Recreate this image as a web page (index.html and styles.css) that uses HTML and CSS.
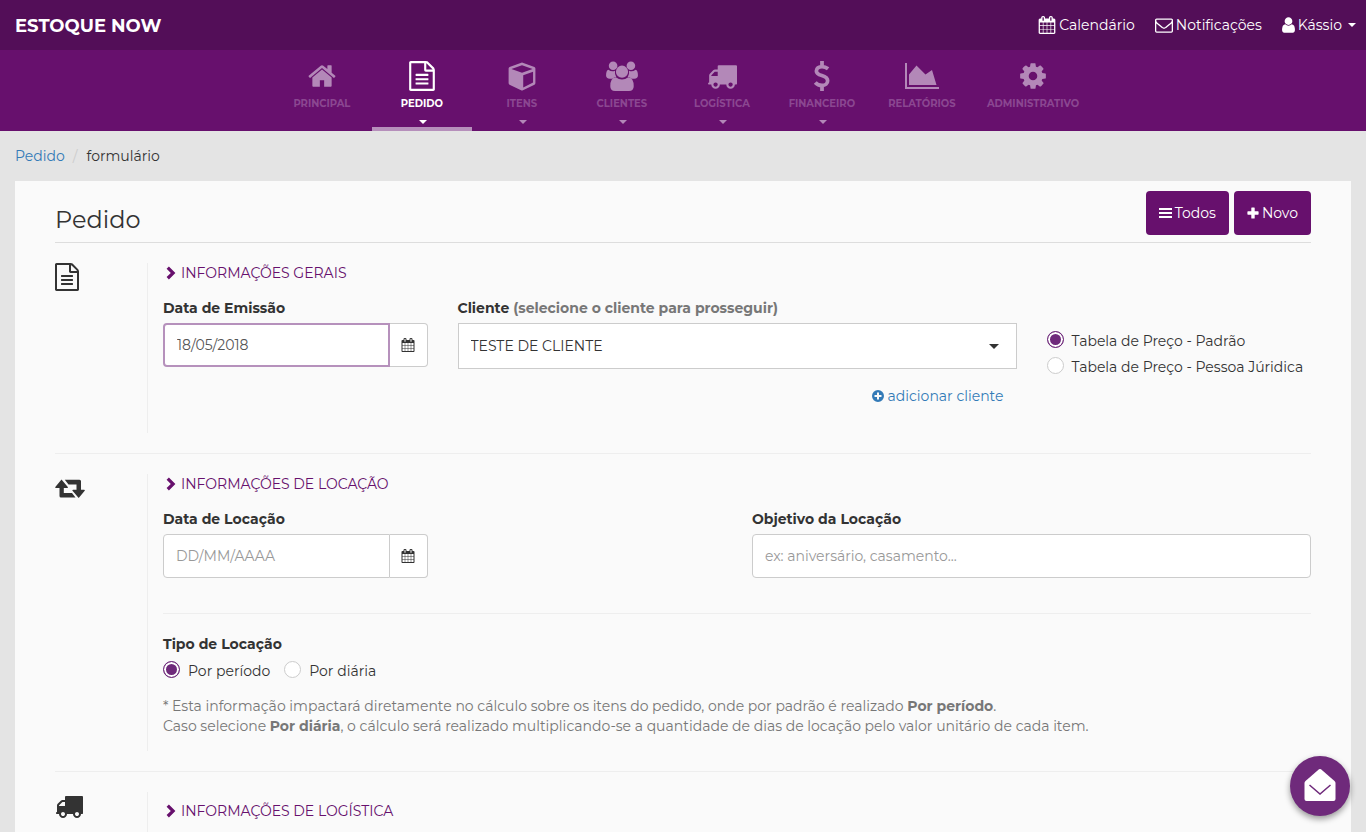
FILE: index.html
```html
<!DOCTYPE html>
<html lang="pt-BR">
<head>
<meta charset="utf-8">
<meta name="viewport" content="width=device-width, initial-scale=1">
<title>Estoque Now - Pedido</title>
<link rel="stylesheet" href="styles.css">
</head>
<body>
<svg class="sprite" aria-hidden="true">
  <symbol id="i-home" viewBox="0 0 1792 1792"><path d="M1472 992v480q0 26-19 45t-45 19h-384v-384h-256v384h-384q-26 0-45-19t-19-45v-480q0-1 .5-3t.5-3l575-474 575 474q1 2 1 6zm223-69l-62 74q-8 9-21 11h-3q-13 0-21-7l-692-577-692 577q-12 8-24 7-13-2-21-11l-62-74q-8-10-7-23.5t11-21.5l719-599q32-26 76-26t76 26l244 204v-195q0-14 9-23t23-9h192q14 0 23 9t9 23v408l219 182q10 8 11 21.500t-7 23.500z"/></symbol>
  <symbol id="i-file" viewBox="0 0 1792 1792"><path d="M1596 380q28 28 48 76t20 88v1152q0 40-28 68t-68 28h-1344q-40 0-68-28t-28-68v-1600q0-40 28-68t68-28h896q40 0 88 20t76 48zm-444-244v376h376q-10-29-22-41l-313-313q-12-12-41-22zm384 1528v-1024h-416q-40 0-68-28t-28-68v-416h-768v1536h1280zm-1024-864q0-14 9-23t23-9h704q14 0 23 9t9 23v64q0 14-9 23t-23 9h-704q-14 0-23-9t-9-23v-64zm736 224q14 0 23 9t9 23v64q0 14-9 23t-23 9h-704q-14 0-23-9t-9-23v-64q0-14 9-23t23-9h704zm0 256q14 0 23 9t9 23v64q0 14-9 23t-23 9h-704q-14 0-23-9t-9-23v-64q0-14 9-23t23-9h704z"/></symbol>
  <symbol id="i-truck" viewBox="0 0 1792 1792"><path d="M640 1408q0-52-38-90t-90-38-90 38-38 90 38 90 90 38 90-38 38-90zm-384-512h384v-256h-158q-13 0-22 9l-195 195q-9 9-9 22v30zm1280 512q0-52-38-90t-90-38-90 38-38 90 38 90 90 38 90-38 38-90zm256-1088v1024q0 15-4 26.500t-13.500 18.500-16.500 11.500-23.500 6-22.500 2-25.500 0-22.500-.5q0 106-75 181t-181 75-181-75-75-181h-384q0 106-75 181t-181 75-181-75-75-181h-64q-3 0-22.500.5t-25.500 0-22.500-2-23.500-6-16.500-11.500-13.500-18.500-4-26.500q0-26 19-45t45-19v-320q0-8-.5-35t0-38 2.500-34.500 6.500-37 14-30.500 22.500-30l198-198q19-19 50.500-32t58.500-13h160v-192q0-26 19-45t45-19h1024q26 0 45 19t19 45z"/></symbol>
  <symbol id="i-cal" viewBox="0 0 1792 1792"><path d="M192 1664h288v-288h-288v288zm352 0h320v-288h-320v288zm-352-352h288v-320h-288v320zm352 0h320v-320h-320v320zm-352-384h288v-288h-288v288zm736 736h320v-288h-320v288zm-384-736h320v-288h-320v288zm768 736h288v-288h-288v288zm-384-352h320v-320h-320v320zm-352-864v-288q0-13-9.500-22.500t-22.500-9.500h-64q-13 0-22.500 9.500t-9.500 22.500v288q0 13 9.500 22.500t22.500 9.500h64q13 0 22.500-9.500t9.500-22.500zm736 864h288v-320h-288v320zm-384-384h320v-288h-320v288zm384 0h288v-288h-288v288zm32-480v-288q0-13-9.500-22.500t-22.500-9.500h-64q-13 0-22.500 9.500t-9.500 22.500v288q0 13 9.500 22.500t22.500 9.500h64q13 0 22.500-9.500t9.500-22.500zm384-64v1280q0 52-38 90t-90 38h-1408q-52 0-90-38t-38-90v-1280q0-52 38-90t90-38h128v-96q0-66 47-113t113-47h64q66 0 113 47t47 113v96h384v-96q0-66 47-113t113-47h64q66 0 113 47t47 113v96h128q52 0 90 38t38 90z"/></symbol>
  <symbol id="i-mail" viewBox="0 0 1792 1792"><path d="M1664 1504v-768q-32 36-69 66-268 206-426 338-51 43-83 67t-86.500 48.500-102.500 24.500h-2q-48 0-102.500-24.500t-86.500-48.500-83-67q-158-132-426-338-37-30-69-66v768q0 13 9.500 22.500t22.500 9.500h1472q13 0 22.500-9.500t9.500-22.500zm0-1051v-24.500l-.5-13-3-12.500-5.500-9-9-7.500-14-2.500h-1472q-13 0-22.500 9.500t-9.500 22.500q0 168 147 284 193 152 401 317 6 5 35 29.500t46 37.500 44.500 31.500 50.500 27.500 43 9h2q20 0 43-9t50.500-27.500 44.500-31.500 46-37.500 35-29.500q208-165 401-317 54-43 100.500-115.500t46.500-131.500zm128-37v1088q0 66-47 113t-113 47h-1472q-66 0-113-47t-47-113v-1088q0-66 47-113t113-47h1472q66 0 113 47t47 113z"/></symbol>
  <symbol id="i-cog" viewBox="0 0 1792 1792"><path d="M1152 896q0-106-75-181t-181-75-181 75-75 181 75 181 181 75 181-75 75-181zm512-109v222q0 12-8 23t-20 13l-185 28q-19 54-39 91 35 50 107 138 10 12 10 25t-9 23q-27 37-99 108t-94 71q-12 0-26-9l-138-108q-44 23-91 38-16 136-29 186-7 28-36 28h-222q-14 0-24.500-8.500t-11.500-21.500l-28-184q-49-16-90-37l-141 107q-10 9-25 9-14 0-25-11-126-114-165-168-7-10-7-23 0-12 8-23 15-21 51-66.500t54-70.500q-27-50-41-99l-183-27q-13-2-21-12.500t-8-23.500v-222q0-12 8-23t19-13l186-28q14-46 39-92-40-57-107-138-10-12-10-24 0-10 9-23 26-36 98.500-107.500t94.500-71.500q13 0 26 10l138 107q44-23 91-38 16-136 29-186 7-28 36-28h222q14 0 24.500 8.500t11.500 21.500l28 184q49 16 90 37l142-107q9-9 24-9 13 0 25 10 129 119 165 170 7 8 7 22 0 12-8 23-15 21-51 66.500t-54 70.500q26 50 41 98l183 28q13 2 21 12.500t8 23.500z"/></symbol>
  <symbol id="i-user" viewBox="256 0 1280 1792"><path d="M1536 1399q0 109-62.500 187t-150.500 78h-854q-88 0-150.500-78t-62.500-187q0-85 8.500-160.500t31.500-152 58.500-131 94-89 134.500-34.500q131 128 313 128t313-128q76 0 134.500 34.500t94 89 58.500 131 31.500 152 8.500 160.500zm-256-887q0 159-112.500 271.500t-271.500 112.500-271.500-112.500-112.500-271.500 112.500-271.500 271.500-112.500 271.500 112.500 112.500 271.500z"/></symbol>
  <symbol id="i-cube" viewBox="0 0 32 32"><path fill-rule="evenodd" d="M16 1.500 29.300 6.300Q30.300 6.800 30.300 8V23.500Q30.300 24.700 29.300 25.300L17 31.200Q16 31.700 15 31.200L2.700 25.300Q1.700 24.700 1.700 23.500V8Q1.700 6.800 2.700 6.300ZM16 4.400 4.700 8.400 16 12.600 27.300 8.400ZM17.300 15.200V28.200L27.800 23V11.400Z"/></symbol>
  <symbol id="i-users" viewBox="0 0 34 32"><path fill-rule="evenodd" d="M7.500.4A4.600 4.600 0 1 1 7.500 9.600A4.600 4.600 0 1 1 7.500.4ZM26.500.4A4.600 4.600 0 1 1 26.500 9.600A4.600 4.600 0 1 1 26.500.4Z"/><path d="M2.500 9.300Q6 12 9.500 10.400Q9 14.500 10.900 17Q8.500 17.300 6.800 18.800H4Q0 18.800 0 15.500Q0 10 2.500 9.300ZM31.500 9.300Q28 12 24.500 10.400Q25 14.500 23.100 17Q25.500 17.300 27.200 18.800H30Q34 18.800 34 15.500Q34 10 31.500 9.300Z"/><circle cx="17" cy="11.400" r="6.500"/><path d="M10.300 17.300Q17 22.300 23.700 17.300Q29.500 17.800 29.500 27Q29.500 32 24.500 32H9.500Q4.500 32 4.500 27Q4.500 17.800 10.300 17.300Z"/></symbol>
  <symbol id="i-usd" viewBox="0 0 18 32"><path d="M9 0V6M9 26V32M15.500 8.300Q12.500 5.900 9 5.900C5.500 5.900 3 7.800 3 10.600C3 17 15 14 15 21C15 24 12.500 26.100 9 26.100Q4.500 26.100 1.800 22.900" fill="none" stroke="currentColor" stroke-width="4"/></symbol>
  <symbol id="i-chart" viewBox="1 0 34 28"><path d="M1 1H3V25H35V27H1ZM5 23V12.500L12.500 3.500 21.500 12.500 28 8 32.500 23Z"/></symbol>
  <symbol id="i-retweet" viewBox="0 0 30 20"><path d="M6.500 0.500 12.800 8Q13.300 9 12.300 9H8.800V14H17L20.500 18.600H6Q4.500 18.600 4.500 17V9H1Q-.3 9 .3 8ZM9.800 .8H24.500Q26 .8 26 2.300V10.800H29.200Q30.300 10.800 29.700 11.800L23.700 18.900 17.500 11.800Q17 10.800 18 10.800H21.500V5.400H13.500Z"/></symbol>
  <symbol id="i-bars" viewBox="0 0 13 12"><path d="M0 1h13v2h-13zM0 5h13v2h-13zM0 9h13v2h-13z"/></symbol>
  <symbol id="i-plus" viewBox="0 0 12 12"><path d="M4.300.9Q4.300.4 4.800.4H7.200Q7.700.4 7.700.9V4.300H11Q11.600 4.300 11.600 4.900V7.100Q11.600 7.700 11 7.700H7.700V11Q7.700 11.600 7.200 11.600H4.800Q4.300 11.600 4.300 11V7.700H1Q.4 7.700.4 7.100V4.900Q.4 4.300 1 4.300H4.300Z"/></symbol>
  <symbol id="i-pluscircle" viewBox="0 0 12 12"><path fill-rule="evenodd" d="M6 0A6 6 0 1 1 6 12A6 6 0 1 1 6 0ZM5 2.500V5H2.500V7H5V9.500H7V7H9.500V5H7V2.500Z"/></symbol>
  <symbol id="i-chevron" viewBox="0 0 10 14"><path d="M.6 2.800 2.900.5 9.400 6.900 2.900 13.400 .6 11.100 4.800 6.900Z"/></symbol>
  <symbol id="i-openmail" viewBox="0 0 32 34"><path d="M1.500 13 15 1.300Q16 .5 17 1.300L30.500 13Q31.500 14 31.500 15V31Q31.500 33 29.500 33H2.500Q.5 33 .5 31V15Q.5 14 1.500 13Z"/><path d="M5.500 17 16 26 26.500 17" fill="none" stroke="#6f2a7b" stroke-width="1.500"/></symbol>
</svg>

<header class="topbar">
  <a class="brand" href="#">ESTOQUE NOW</a>
  <nav class="toplinks" aria-label="Conta">
    <a href="#"><svg class="ico ico-lg"><use href="#i-cal"/></svg>Calendário</a>
    <a href="#"><svg class="ico ico-lg"><use href="#i-mail"/></svg>Notificações</a>
    <a href="#"><svg class="ico ico-user"><use href="#i-user"/></svg>Kássio<span class="caret caret-user"></span></a>
  </nav>
</header>

<nav class="mainnav" aria-label="Principal">
  <a href="#"><svg class="nav-ico"><use href="#i-home"/></svg><span>PRINCIPAL</span></a>
  <a href="#" class="active" aria-current="page"><svg class="nav-ico"><use href="#i-file"/></svg><span>PEDIDO</span><i class="caret"></i></a>
  <a href="#"><svg class="nav-ico"><use href="#i-cube"/></svg><span>ITENS</span><i class="caret"></i></a>
  <a href="#"><svg class="nav-ico nav-wide"><use href="#i-users"/></svg><span>CLIENTES</span><i class="caret"></i></a>
  <a href="#"><svg class="nav-ico"><use href="#i-truck"/></svg><span>LOGÍSTICA</span><i class="caret"></i></a>
  <a href="#"><svg class="nav-ico"><use href="#i-usd"/></svg><span>FINANCEIRO</span><i class="caret"></i></a>
  <a href="#"><svg class="nav-ico nav-wide"><use href="#i-chart"/></svg><span>RELATÓRIOS</span></a>
  <a href="#"><svg class="nav-ico"><use href="#i-cog"/></svg><span>ADMINISTRATIVO</span></a>
</nav>

<div class="breadcrumb"><a href="#">Pedido</a><span class="sep">/</span><span>formulário</span></div>

<main class="card">
  <div class="card-head">
    <h1>Pedido</h1>
    <div class="actions">
      <button type="button" class="btn"><svg class="ico ico-bars"><use href="#i-bars"/></svg>Todos</button>
      <button type="button" class="btn"><svg class="ico ico-sm"><use href="#i-plus"/></svg>Novo</button>
    </div>
  </div>

  <section class="section">
    <div class="side"><svg class="side-ico"><use href="#i-file"/></svg></div>
    <div class="content content-general">
      <h2><svg class="chev"><use href="#i-chevron"/></svg>INFORMAÇÕES GERAIS</h2>
      <div class="grid">
        <div>
          <label class="lbl" for="emissao">Data de Emissão</label>
          <div class="group">
            <input id="emissao" class="field focused" type="text" value="18/05/2018">
            <button type="button" class="addon" aria-label="Abrir calendário"><svg class="ico"><use href="#i-cal"/></svg></button>
          </div>
        </div>
        <div class="span2">
          <label class="lbl" for="cliente">Cliente <span class="muted">(selecione o cliente para prosseguir)</span></label>
          <div class="selectbox">
            <select id="cliente"><option>TESTE DE CLIENTE</option></select>
            <span class="caret"></span>
          </div>
          <a class="add" href="#"><svg class="ico ico-sm"><use href="#i-pluscircle"/></svg>adicionar cliente</a>
        </div>
        <div class="radios">
          <label><input type="radio" name="tabela" checked>Tabela de Preço - Padrão</label>
          <label><input type="radio" name="tabela">Tabela de Preço - Pessoa Júridica</label>
        </div>
      </div>
    </div>
  </section>

  <section class="section">
    <div class="side"><svg class="side-ico side-retweet"><use href="#i-retweet"/></svg></div>
    <div class="content">
      <h2><svg class="chev"><use href="#i-chevron"/></svg>INFORMAÇÕES DE LOCAÇÃO</h2>
      <div class="grid">
        <div>
          <label class="lbl" for="locacao">Data de Locação</label>
          <div class="group">
            <input id="locacao" class="field" type="text" placeholder="DD/MM/AAAA">
            <button type="button" class="addon" aria-label="Abrir calendário"><svg class="ico"><use href="#i-cal"/></svg></button>
          </div>
        </div>
        <div class="span2 right">
          <label class="lbl" for="objetivo">Objetivo da Locação</label>
          <div class="group"><input id="objetivo" class="field solo" type="text" placeholder="ex: aniversário, casamento..."></div>
        </div>
      </div>
      <fieldset class="kind">
        <legend class="lbl">Tipo de Locação</legend>
        <div class="inline">
          <label><input type="radio" name="tipo" checked>Por período</label>
          <label><input type="radio" name="tipo">Por diária</label>
        </div>
      </fieldset>
      <p class="help">* Esta informação impactará diretamente no cálculo sobre os itens do pedido, onde por padrão é realizado <b>Por período</b>.<br>Caso selecione <b>Por diária</b>, o cálculo será realizado multiplicando-se a quantidade de dias de locação pelo valor unitário de cada item.</p>
    </div>
  </section>

  <section class="section last">
    <div class="side"><svg class="side-ico"><use href="#i-truck"/></svg></div>
    <div class="content">
      <h2 class="h2-last"><svg class="chev"><use href="#i-chevron"/></svg>INFORMAÇÕES DE LOGÍSTICA</h2>
    </div>
  </section>
</main>

<button type="button" class="fab" aria-label="Mensagens"><svg><use href="#i-openmail"/></svg></button>
</body>
</html>
```
FILE: styles.css
```css
* { box-sizing: border-box; }

body {
  margin: 0;
  min-height: 100vh;
  display: flex;
  flex-direction: column;
  background: #e4e4e4;
  color: #333;
  font: 14px/20px Montserrat, Inter, "Open Sans", sans-serif;
}

a { color: #337ab7; text-decoration: none; }
button, input, select { font: inherit; color: inherit; }
svg { fill: currentColor; flex: none; }
.sprite { position: absolute; width: 0; height: 0; }
.ico { width: 14px; height: 14px; }
.ico-sm { width: 12px; height: 12px; }
.ico-bars { width: 13px; height: 12px; }
.ico-lg { width: 18px; height: 18px; }
.ico-user { width: 13px; height: 18px; }

.caret {
  border: 4px solid transparent;
  border-top-color: currentColor;
  border-bottom: 0;
}

.topbar {
  height: 50px;
  padding: 0 10px 0 15px;
  display: flex;
  align-items: center;
  justify-content: space-between;
  background: #530e58;
}
.topbar a { color: #fff; }
.brand { font-size: 18px; line-height: 20px; font-weight: 700; padding-top: 2px; }
.toplinks { display: flex; gap: 20px; }
.toplinks a { display: flex; align-items: center; gap: 3px; }
.caret-user { margin-left: 3px; }

.mainnav {
  height: 81px;
  display: flex;
  justify-content: center;
  background: #67106d;
}
.mainnav a {
  min-width: 100px;
  padding: 11px 15px 0;
  display: flex;
  flex-direction: column;
  align-items: center;
  border-bottom: 4px solid transparent;
  color: #b388b8;
}
.mainnav span {
  margin-top: 5px;
  font-size: 10px;
  line-height: 15px;
  font-weight: 700;
  color: #8b4791;
}
.mainnav .active { color: #fff; border-bottom-color: #b68fbb; }
.mainnav .active span { color: #fff; }
.mainnav .caret { margin: 9px 0 0 2px; }
.nav-ico { width: 30px; height: 30px; }
.nav-wide { width: 34px; }

.breadcrumb { padding: 15px; display: flex; }
.sep { padding: 0 9px 0 8px; color: #ccc; }

.card {
  flex: 1;
  margin: 0 15px;
  padding: 10px 40px 0;
  display: flex;
  flex-direction: column;
  background: #fafafa;
}
.card-head {
  height: 52px;
  display: flex;
  justify-content: space-between;
  border-bottom: 1px solid #ddd;
}
h1 { margin: 13px 0 0; font-size: 24px; line-height: 32px; font-weight: 400; }
.actions { display: flex; gap: 5px; }
.btn {
  height: 44px;
  padding: 0 13px;
  display: flex;
  align-items: center;
  gap: 3px;
  border: 0;
  border-radius: 4px;
  background: #67106d;
  color: #fff;
}

.section { padding: 20px 0; display: flex; border-bottom: 1px solid #eee; }
.last { flex: 1; padding-bottom: 0; border-bottom: 0; }
.side { width: 92px; flex: none; }
.side-ico { display: block; width: 28px; height: 28px; margin-left: -2px; }
.side-retweet { width: 30px; height: 20px; margin: 5px 0 0; }
.last .side-ico { margin-left: 0; }
.content { flex: 1; padding-left: 15px; border-left: 1px solid #eee; }
.content-general { min-height: 170px; }
h2 {
  margin: 0 0 15px;
  padding-left: 3px;
  display: flex;
  align-items: center;
  gap: 5px;
  font-size: 14px;
  line-height: 20px;
  font-weight: 400;
  color: #67106d;
}
.h2-last { padding-top: 9px; }
.chev { width: 10px; height: 14px; }

.grid { display: grid; grid-template-columns: repeat(4, minmax(0, 1fr)); gap: 0 30px; }
.span2 { grid-column: span 2; }
.right { grid-column: 3 / 5; }
.lbl { display: block; margin-bottom: 5px; padding: 0; font-weight: 700; }
.muted { color: #777; }

.group { display: flex; height: 44px; }
.field {
  flex: 1;
  min-width: 0;
  padding: 0 12px;
  border: 1px solid #ccc;
  border-radius: 4px 0 0 4px;
  background: #fff;
  color: #555;
  outline: 0;
}
.field::placeholder { color: #999; opacity: 1; }
.focused { border: 2px solid #b691bc; }
.solo { border-radius: 4px; }
.addon {
  width: 38px;
  padding: 0;
  display: grid;
  place-items: center;
  border: 1px solid #ccc;
  border-left: 0;
  border-radius: 0 4px 4px 0;
  background: #fff;
}

.selectbox { display: grid; align-items: center; }
.selectbox > * { grid-area: 1 / 1; }
.selectbox select {
  width: 100%;
  height: 46px;
  padding: 0 12px;
  appearance: none;
  border: 1px solid #ccc;
  border-radius: 0;
  background: #fff;
  color: #333;
}
.selectbox .caret { justify-self: end; margin-right: 18px; border-width: 5px 5px 0; pointer-events: none; }
.add {
  margin: 17px 13px 0 0;
  display: flex;
  align-items: center;
  justify-content: flex-end;
  gap: 4px;
}

.radios { padding-top: 33px; display: flex; flex-direction: column; gap: 6px; white-space: nowrap; }
.radios label, .inline label { display: flex; gap: 8px; align-items: flex-start; }
input[type="radio"] {
  appearance: none;
  width: 17px;
  height: 17px;
  margin: 0;
  flex: none;
  border: 1px solid #ccc;
  border-radius: 50%;
  background: #fff;
}
input[type="radio"]:checked {
  border-color: #6f2a7b;
  background: #6f2a7b;
  box-shadow: inset 0 0 0 2px #fff;
}

.kind { margin: 35px 0 0; padding: 20px 0 0; border: 0; border-top: 1px solid #eee; }
.kind legend { float: left; width: 100%; margin-bottom: 7px; }
.inline { clear: both; display: flex; gap: 14px; }
.help { margin: 15px 0; color: #777; }

.fab {
  position: fixed;
  right: 16px;
  bottom: 16px;
  width: 60px;
  height: 60px;
  padding: 0 0 2px;
  display: grid;
  place-items: center;
  border: 0;
  border-radius: 50%;
  background: #6f2a7b;
  color: #fff;
  box-shadow: 0 3px 6px rgba(0, 0, 0, .4);
}
.fab svg { width: 32px; height: 34px; }
```
